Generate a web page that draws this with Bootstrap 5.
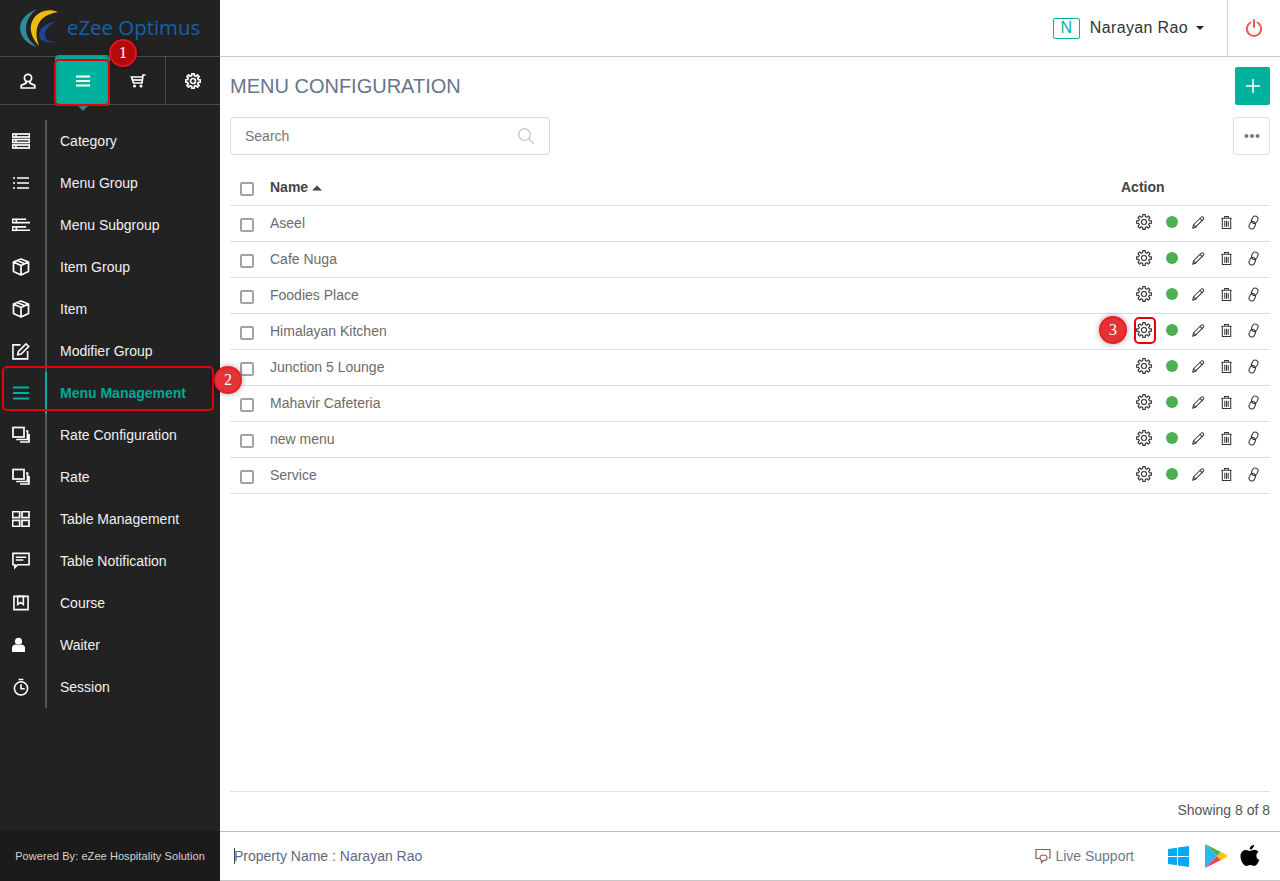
<!DOCTYPE html>
<html lang="en"><head><meta charset="utf-8"><title>Menu Configuration</title>
<link href="https://cdn.jsdelivr.net/npm/bootstrap@5.3.0/dist/css/bootstrap.min.css" rel="stylesheet">
<style>
html,body{height:881px;overflow:hidden}
body{font-family:"Liberation Sans",Arial,sans-serif;font-size:14px;background:#fff;color:#6b6b6b}
.shell{height:881px;position:relative}
.side{width:220px;background:#222;flex:none}
.brand{height:57px;border-bottom:1px solid #4a4a4a;padding-left:19px;gap:6px}
.brand-name{font-family:"Open Sans",sans-serif;font-size:20.4px;color:#1661ad;line-height:1;margin-top:-2px}
.tabs{height:48px;border-bottom:1px solid #4a4a4a;position:relative}
.tab-cell{width:55px;color:#fff}
.tab-cell svg{stroke-width:1.7}
.tab-last{border-left:1px solid #4a4a4a}
.tab-on{background:#00b19d;border-radius:4px;position:relative;box-shadow:inset 0 0 5px rgba(0,0,0,.25);height:51px;margin-top:-2px}
.tab-on::after{content:"";position:absolute;left:50%;bottom:-5px;margin-left:-6px;border:6px solid transparent;border-bottom:0;border-top-color:#3c7f78}
.snav{margin-top:15px;height:588px}
.snav-row{height:42px;color:#f0f0f0;font-size:14px}
.snav-ico{width:47px;height:42px;border-right:2px solid #555;padding-left:12px;color:#fff}
.snav-ico svg{stroke-width:1.7}
.nudge{margin-left:1px}
.snav-text{padding-left:13px}
.snav-on{color:#00a896;font-weight:700}
.snav-on .snav-ico{color:#00b19d;border-right-color:#00b19d}
.side-foot{height:50px;background:#1b1b1b;color:#d4d4d4;font-size:11px;letter-spacing:.07px}
.main{min-width:0}
.topbar{height:57px;border-bottom:1px solid #c2ccd8;color:#333;font-size:16px}
.avatar{width:27px;height:21px;border:1px solid #00b19d;border-radius:2px;color:#00b19d;font-size:16px;line-height:1;margin-right:10px}
.user-name{letter-spacing:.36px}
.caret-dn{width:0;height:0;border:4px solid transparent;border-top-color:#222;border-bottom:0;margin-left:8px}
.power{width:53px;height:56px;border-left:1px solid #ccd5de;margin-left:23px}
.work{padding:10px 10px 0;min-height:0}
.page-title{font-size:20px;font-weight:400;color:#66758a;margin:0;line-height:38px}
.add-btn{width:35px;height:38px;background:#00b19d;border-radius:2px}
.tool-row{margin-top:12px}
.search-box{width:320px;height:38px;border:1px solid #d3dde6;border-radius:3px;padding:0 14px;color:#777}
.more-btn{width:37px;height:38px;border:1px solid #d8dfe6;border-radius:3px;background:#fff}
.grid-tbl{width:100%;margin:13px 0 0;border-collapse:collapse}
.grid-tbl td,.grid-tbl th{height:36px;border-bottom:1px solid #d6dee6;padding:0;vertical-align:middle;font-weight:400}
.grid-tbl th{height:37px;font-weight:700;color:#444;padding-top:2px}
.ck-cell{width:40px;padding-left:10px!important}
.ck{display:block;width:14px;height:14px;border:2px solid #a3a3a3;border-radius:2px;margin-top:3px}
.act-cell{width:148px}
.act-title{margin-left:-1px}
.act-wrap{gap:12.5px;padding-left:14px;color:#333;margin-top:-2px}
.act-wrap svg{flex:none;stroke-width:1.1}
.dot-on{width:12px;height:12px;border-radius:50%;background:#4caf50;flex:none;margin:0 1px}
.spacer-fill{flex:1}
.count-bar{border-top:1px solid #e2e2e2;border-radius:0 0 4px 4px;height:40px;padding-bottom:2px;color:#555}
.footbar{height:50px;border-top:1px solid #b9bdc2;border-bottom:1px solid #c8c8c8;color:#5d6a80;padding:0 20px 0 14px}
.cursor-bar{width:1px;height:16px;background:#444;margin-right:-1px}
.live{color:#6b7a8f;margin-right:33px}
.store-a{margin-right:14px}
.store-b{margin-right:12px}
.num-pin{position:absolute;width:28px;height:28px;border-radius:50%;color:#fff;display:flex;align-items:center;justify-content:center;font-family:"Liberation Serif",serif;font-size:16px;border:2px solid #e81d25;background:#e53238;box-shadow:0 0 6px rgba(0,0,0,.35)}
.num-dark{background:#b30a0a;border-color:#e0141a}
.red-ring{position:absolute;border:2px solid #e8000b;border-radius:5px;pointer-events:none}
</style></head>
<body>
<svg width="0" height="0" class="position-absolute">
<defs>
<symbol id="i-gear" viewBox="0 0 16 16"><g fill="none" stroke="currentColor" stroke-linejoin="round"><path d="M6.670 2.660L6.830 .59H9.170L9.330 2.660 10.830 3.290 12.410 1.930 14.070 3.590 12.710 5.170 13.340 6.670 15.410 6.830V9.170L13.340 9.330 12.710 10.830 14.070 12.410 12.410 14.070 10.830 12.710 9.330 13.340 9.170 15.410H6.830L6.670 13.340 5.170 12.710 3.590 14.070 1.930 12.410 3.290 10.830 2.660 9.330 .59 9.170V6.830L2.660 6.670 3.290 5.170 1.930 3.590 3.590 1.930 5.170 3.290z"/><circle cx="8" cy="8" r="2.500"/></g></symbol>
<symbol id="i-pen" viewBox="0 0 16 16"><g fill="none" stroke="currentColor" stroke-linejoin="round"><path d="M1.800 14.200l1-3.800 8-8c.7-.7 1.700-.7 2.300 0 .6.600.6 1.600 0 2.300l-8 8z"/><path d="M2.800 10.400l2.800 2.800M9.600 3.600l2.800 2.800"/></g></symbol>
<symbol id="i-trash" viewBox="0 0 16 16"><g fill="none" stroke="currentColor"><path d="M3.500 4v10.500h9V4M2.500 3.500h11M6 3.300V1.500h4v1.800M6.200 6v6.500M8 6v6.500M9.800 6v6.500"/></g></symbol>
<symbol id="i-link" viewBox="0 0 16 16"><g fill="none" stroke="currentColor"><rect x="6.300" y="1" width="6" height="8.200" rx="3" transform="rotate(25 9.300 5.100)"/><rect x="3.700" y="6.800" width="6" height="8.200" rx="3" transform="rotate(25 6.700 10.900)"/></g></symbol>
<symbol id="i-box" viewBox="0 0 18 18"><g fill="none" stroke="currentColor" stroke-linejoin="round"><path d="M9 1l7.500 3v9.500L9 17l-7.500-3.500V4zM1.500 4L9 7.500 16.500 4M9 7.500V17M5.200 2.500l7.500 3.200"/></g></symbol>
<symbol id="i-copy" viewBox="0 0 18 18"><g fill="none" stroke="currentColor"><rect x="1" y="1.500" width="11" height="9.500"/><path d="M14 5h1.500v8.500H5V13M17 8v8H8"/></g></symbol>
<symbol id="i-bars" viewBox="0 0 16 14"><path d="M0 1.500h16M0 7h16M0 12.500h16" stroke="currentColor" stroke-width="2" fill="none"/></symbol>
</defs></svg>

<div class="shell d-flex">
<aside class="side d-flex flex-column">
  <div class="brand d-flex align-items-center">
    <svg width="42" height="42" viewBox="0 0 42 42"><path d="M18 2C6 7 1 14 1 21c0 9 7 16 17 19-7-5-11-11-11-18 0-8 4-15 11-20z" fill="#2f8aa0"/><path d="M39 5C30 1 20 4 15 11c-5 7-5 17 5 28-4-11-3-20 2-26 5-5 11-7 17-8z" fill="#f0b90b"/><path d="M37 14c-9 2-17 7-17 14 0 6 8 9 18 7-7 0-12-2-12-7 0-5 4-10 11-14z" fill="#23418f"/></svg>
    <span class="brand-name">eZee Optimus</span>
  </div>
  <div class="tabs d-flex">
    <div class="tab-cell d-flex align-items-center justify-content-center"><svg width="16" height="16" viewBox="0 0 16 16"><g fill="none" stroke="currentColor"><circle cx="8" cy="5" r="3.600"/><path d="M6 8.500v1.600L1.200 12.400v2.600h13.600v-2.600L10 10.100V8.500"/></g></svg></div>
    <div class="tab-cell tab-on d-flex align-items-center justify-content-center"><svg width="14" height="12" viewBox="0 0 14 12"><path d="M0 1.500h14M0 6h14M0 10.500h14" stroke="#fff" stroke-width="2"/></svg></div>
    <div class="tab-cell d-flex align-items-center justify-content-center"><svg width="16" height="14" viewBox="0 0 16 14"><g fill="none" stroke="currentColor"><path d="M15.500 1H13l-1 8H3.500L1.500 3H12.800"/><path d="M3 6h9"/></g><circle cx="4.500" cy="12" r="1.500" fill="currentColor"/><circle cx="11" cy="12" r="1.500" fill="currentColor"/></svg></div>
    <div class="tab-cell tab-last d-flex align-items-center justify-content-center"><svg width="16" height="16"><use href="#i-gear"/></svg></div>
  </div>
  <nav class="snav">
    <div class="snav-row d-flex align-items-center"><span class="snav-ico d-flex align-items-center"><svg width="18" height="16" viewBox="0 0 18 16"><g fill="none" stroke="currentColor"><rect x=".6" y="1" width="16.800" height="3"/><rect x=".6" y="6.500" width="16.800" height="3"/><rect x=".6" y="12" width="16.800" height="3"/><path d="M4 1v3M4 6.500v3M4 12v3"/></g></svg></span><span class="snav-text">Category</span></div>
    <div class="snav-row d-flex align-items-center"><span class="snav-ico d-flex align-items-center"><svg width="16" height="14" viewBox="0 0 16 14" class="nudge"><path d="M4 2h12M4 7h12M4 12h12M0 2h2M0 7h2M0 12h2" stroke="currentColor" stroke-width="1.600"/></svg></span><span class="snav-text">Menu Group</span></div>
    <div class="snav-row d-flex align-items-center"><span class="snav-ico d-flex align-items-center"><svg width="18" height="14" viewBox="0 0 19 14"><g fill="none" stroke="currentColor"><rect x=".6" y="1" width="4" height="3.600"/><rect x=".6" y="9" width="4" height="3.600"/><path d="M5 1h10M5 4.500h14M5 9h10M5 12.500h14"/></g></svg></span><span class="snav-text">Menu Subgroup</span></div>
    <div class="snav-row d-flex align-items-center"><span class="snav-ico d-flex align-items-center"><svg width="18" height="18"><use href="#i-box"/></svg></span><span class="snav-text">Item Group</span></div>
    <div class="snav-row d-flex align-items-center"><span class="snav-ico d-flex align-items-center"><svg width="18" height="18"><use href="#i-box"/></svg></span><span class="snav-text">Item</span></div>
    <div class="snav-row d-flex align-items-center"><span class="snav-ico d-flex align-items-center"><svg width="18" height="18" viewBox="0 0 19 18"><g fill="none" stroke="currentColor"><path d="M9 2.500H1v14.800h15.500V9"/><path d="M6 13l.8-3.500 8-8 2.800 2.800-8 8z"/></g></svg></span><span class="snav-text">Modifier Group</span></div>
    <div class="snav-row snav-on d-flex align-items-center"><span class="snav-ico d-flex align-items-center"><svg width="16" height="14" class="nudge"><use href="#i-bars"/></svg></span><span class="snav-text">Menu Management</span></div>
    <div class="snav-row d-flex align-items-center"><span class="snav-ico d-flex align-items-center"><svg width="18" height="18"><use href="#i-copy"/></svg></span><span class="snav-text">Rate Configuration</span></div>
    <div class="snav-row d-flex align-items-center"><span class="snav-ico d-flex align-items-center"><svg width="18" height="18"><use href="#i-copy"/></svg></span><span class="snav-text">Rate</span></div>
    <div class="snav-row d-flex align-items-center"><span class="snav-ico d-flex align-items-center"><svg width="18" height="16" viewBox="0 0 18 16"><g fill="none" stroke="currentColor"><rect x=".6" y=".6" width="7" height="6"/><rect x="10" y=".6" width="7" height="6"/><rect x=".6" y="9.400" width="7" height="6"/><rect x="10" y="9.400" width="7" height="6"/></g></svg></span><span class="snav-text">Table Management</span></div>
    <div class="snav-row d-flex align-items-center"><span class="snav-ico d-flex align-items-center"><svg width="18" height="18" viewBox="0 0 19 18"><g fill="none" stroke="currentColor"><path d="M1 1h17v12H6l-3 3v-3H1z"/><path d="M4 5h11M4 8h8"/></g></svg></span><span class="snav-text">Table Notification</span></div>
    <div class="snav-row d-flex align-items-center"><span class="snav-ico d-flex align-items-center"><svg width="16" height="16" viewBox="0 0 17 16" class="nudge"><g fill="none" stroke="currentColor"><path d="M1 1h15v14H1z"/><path d="M5 1h6v8.500L8 7.500 5 9.500z"/></g></svg></span><span class="snav-text">Course</span></div>
    <div class="snav-row d-flex align-items-center"><span class="snav-ico d-flex align-items-center"><svg width="13" height="16" viewBox="0 0 14 16" fill="currentColor"><circle cx="7" cy="4" r="3.800"/><path d="M0 15.500V11c0-2 2-3.200 4-3.500 2 1 4 1 6 0 2 .3 4 1.500 4 3.500v4.500z"/></svg></span><span class="snav-text">Waiter</span></div>
    <div class="snav-row d-flex align-items-center"><span class="snav-ico d-flex align-items-center"><svg width="16" height="18" viewBox="0 0 17 18" class="nudge"><g fill="none" stroke="currentColor"><circle cx="8.500" cy="10.500" r="7"/><path d="M8.500 6v4.800h4M6 1h5"/></g></svg></span><span class="snav-text">Session</span></div>
  </nav>
  <div class="flex-grow-1"></div>
  <div class="side-foot d-flex align-items-center justify-content-center">Powered By: eZee Hospitality Solution</div>
</aside>

<div class="main flex-grow-1 d-flex flex-column">
  <header class="topbar d-flex align-items-center justify-content-end">
    <span class="avatar d-flex align-items-center justify-content-center">N</span>
    <span class="user-name">Narayan Rao</span><span class="caret-dn"></span>
    <span class="power d-flex align-items-center justify-content-center"><svg width="18" height="18" viewBox="0 0 18 18"><g fill="none" stroke="#ee5a52" stroke-width="2" stroke-linecap="round"><path d="M5.500 3.500a7.200 7.200 0 1 0 7 0M9 1v7"/></g></svg></span>
  </header>
  <div class="work flex-grow-1 d-flex flex-column">
    <div class="d-flex justify-content-between align-items-center">
      <h1 class="page-title">MENU CONFIGURATION</h1>
      <span class="add-btn d-flex align-items-center justify-content-center"><svg width="16" height="16" viewBox="0 0 16 16"><path d="M8 1v14M1 8h14" stroke="#fff" stroke-width="1.500"/></svg></span>
    </div>
    <div class="tool-row d-flex justify-content-between align-items-center">
      <div class="search-box d-flex align-items-center justify-content-between"><span>Search</span><svg width="18" height="18" viewBox="0 0 18 18"><g fill="none" stroke="#c4c4c4" stroke-width="1.300"><circle cx="7.500" cy="7.500" r="5.800"/><path d="M11.800 11.800l5 5"/></g></svg></div>
      <span class="more-btn d-flex align-items-center justify-content-center"><svg width="16" height="4" viewBox="0 0 16 4" fill="#6b7a8f"><circle cx="2.500" cy="2" r="2"/><circle cx="8" cy="2" r="2"/><circle cx="13.500" cy="2" r="2"/></svg></span>
    </div>
    <table class="grid-tbl">
      <thead><tr><th class="ck-cell"><span class="ck"></span></th><th>Name <svg width="10" height="6" viewBox="0 0 10 6" class="align-middle"><path d="M0 5.500L5 .5l5 5z" fill="#444"/></svg></th><th class="act-cell"><span class="d-block act-title">Action</span></th></tr></thead>
      <tbody>
      <tr><td class="ck-cell"><span class="ck"></span></td><td>Aseel</td><td class="act-cell"><div class="act-wrap d-flex align-items-center"><svg width="16" height="16"><use href="#i-gear"/></svg><span class="dot-on"></span><svg width="15" height="15"><use href="#i-pen"/></svg><svg width="15" height="15"><use href="#i-trash"/></svg><svg width="15" height="15"><use href="#i-link"/></svg></div></td></tr>
      <tr><td class="ck-cell"><span class="ck"></span></td><td>Cafe Nuga</td><td class="act-cell"><div class="act-wrap d-flex align-items-center"><svg width="16" height="16"><use href="#i-gear"/></svg><span class="dot-on"></span><svg width="15" height="15"><use href="#i-pen"/></svg><svg width="15" height="15"><use href="#i-trash"/></svg><svg width="15" height="15"><use href="#i-link"/></svg></div></td></tr>
      <tr><td class="ck-cell"><span class="ck"></span></td><td>Foodies Place</td><td class="act-cell"><div class="act-wrap d-flex align-items-center"><svg width="16" height="16"><use href="#i-gear"/></svg><span class="dot-on"></span><svg width="15" height="15"><use href="#i-pen"/></svg><svg width="15" height="15"><use href="#i-trash"/></svg><svg width="15" height="15"><use href="#i-link"/></svg></div></td></tr>
      <tr><td class="ck-cell"><span class="ck"></span></td><td>Himalayan Kitchen</td><td class="act-cell"><div class="act-wrap d-flex align-items-center"><svg width="16" height="16"><use href="#i-gear"/></svg><span class="dot-on"></span><svg width="15" height="15"><use href="#i-pen"/></svg><svg width="15" height="15"><use href="#i-trash"/></svg><svg width="15" height="15"><use href="#i-link"/></svg></div></td></tr>
      <tr><td class="ck-cell"><span class="ck"></span></td><td>Junction 5 Lounge</td><td class="act-cell"><div class="act-wrap d-flex align-items-center"><svg width="16" height="16"><use href="#i-gear"/></svg><span class="dot-on"></span><svg width="15" height="15"><use href="#i-pen"/></svg><svg width="15" height="15"><use href="#i-trash"/></svg><svg width="15" height="15"><use href="#i-link"/></svg></div></td></tr>
      <tr><td class="ck-cell"><span class="ck"></span></td><td>Mahavir Cafeteria</td><td class="act-cell"><div class="act-wrap d-flex align-items-center"><svg width="16" height="16"><use href="#i-gear"/></svg><span class="dot-on"></span><svg width="15" height="15"><use href="#i-pen"/></svg><svg width="15" height="15"><use href="#i-trash"/></svg><svg width="15" height="15"><use href="#i-link"/></svg></div></td></tr>
      <tr><td class="ck-cell"><span class="ck"></span></td><td>new menu</td><td class="act-cell"><div class="act-wrap d-flex align-items-center"><svg width="16" height="16"><use href="#i-gear"/></svg><span class="dot-on"></span><svg width="15" height="15"><use href="#i-pen"/></svg><svg width="15" height="15"><use href="#i-trash"/></svg><svg width="15" height="15"><use href="#i-link"/></svg></div></td></tr>
      <tr><td class="ck-cell"><span class="ck"></span></td><td>Service</td><td class="act-cell"><div class="act-wrap d-flex align-items-center"><svg width="16" height="16"><use href="#i-gear"/></svg><span class="dot-on"></span><svg width="15" height="15"><use href="#i-pen"/></svg><svg width="15" height="15"><use href="#i-trash"/></svg><svg width="15" height="15"><use href="#i-link"/></svg></div></td></tr>
      </tbody>
    </table>
    <div class="spacer-fill"></div>
    <div class="count-bar d-flex align-items-center justify-content-end">Showing 8 of 8</div>
  </div>
  <footer class="footbar d-flex align-items-center">
    <span class="cursor-bar"></span><span>Property Name : Narayan Rao</span>
    <span class="flex-grow-1"></span>
    <span class="live d-flex align-items-center gap-1"><svg width="16" height="16" viewBox="0 0 16 16"><g fill="none" stroke="#8a5a50" stroke-width="1.200"><path d="M4.500 10.500H1V1.500h14v8.500h-1.500"/><path d="M5 10c0-2 1.300-3 3.500-3S12 8 12 10s-1.300 2.500-3.500 2.500L6.500 14.500v-2.300C5.500 11.800 5 11 5 10z"/></g></svg>Live Support</span>
    <span class="d-flex align-items-center">
      <svg width="23" height="23" viewBox="0 0 24 24" fill="#03a9f4" class="store-a"><path d="M1 4.200l9.500-1.400v8.600H1zM11.500 2.600L23 1v10.400H11.500zM1 12.500h9.500v8.700L1 19.900zM11.500 12.500H23V23l-11.500-1.600z"/></svg>
      <svg width="24" height="26" viewBox="0 0 24 26" class="store-b"><path d="M1 1v24l12-12z" fill="#29b6f6"/><path d="M1 1l12 12 4-4z" fill="#4caf50"/><path d="M1 25l12-12 4 4z" fill="#ef4257"/><path d="M17 9l7 4-7 4-4-4z" fill="#ffc107"/></svg>
      <svg width="20" height="24" viewBox="0 0 20 24" fill="#000"><path d="M14 1c0 2.500-2 4.600-4.300 4.500C9.500 3 11.800 1 14 1zM10 7c1 0 2.500-1.200 4.500-1.200 1.500 0 3 .8 4 2.200-3.200 2-2.700 6.500.8 8-.9 2.400-3 6-5 6-1.400 0-2-1-4-1s-2.700 1-4 1C3.500 22 .5 16.500.5 12.500.5 8.500 3 6 5.800 6c1.700 0 3.200 1 4.200 1z"/></svg>
    </span>
  </footer>
</div>

<span class="red-ring" style="left:54px;top:59px;width:56px;height:47px"></span>
<span class="red-ring" style="left:2px;top:366px;width:212px;height:45px"></span>
<span class="red-ring" style="left:1134px;top:317px;width:22px;height:27px"></span>
<span class="num-pin num-dark" style="left:109px;top:39px">1</span>
<span class="num-pin" style="left:214px;top:366px">2</span>
<span class="num-pin" style="left:1099px;top:316px">3</span>
</div>
</body></html>
